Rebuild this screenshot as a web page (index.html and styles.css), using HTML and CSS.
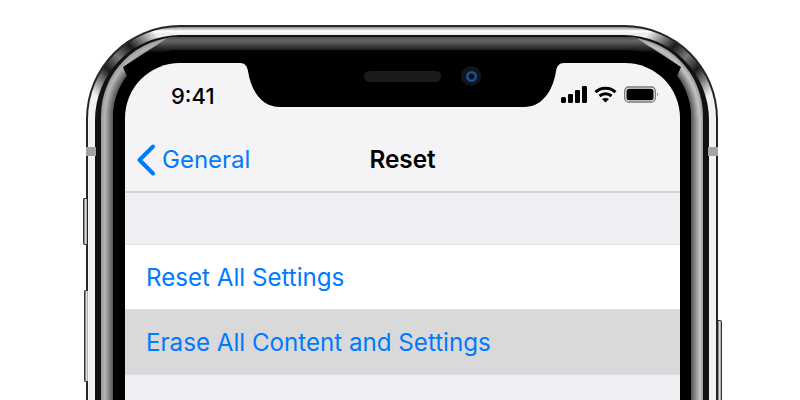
FILE: index.html
```html
<!DOCTYPE html>
<html lang="en">
<head>
    <meta charset="UTF-8">
    <meta name="viewport" content="width=device-width, initial-scale=1.0">
    <title>Reset</title>
    <link rel="stylesheet" href="styles.css">
</head>
<body>
    <div class="device">
        <span class="side-button mute"></span>
        <span class="side-button volume"></span>
        <span class="side-button power"></span>
        <span class="antenna left"></span>
        <span class="antenna right"></span>
        <div class="frame-steel">
            <div class="frame-band">
                <div class="frame-glass">
                    <div class="frame-black">
                        <div class="screen">
                            <svg class="notch" width="324" height="44" viewBox="0 0 324 44">
                                <path d="M0 0H324C319 0 317 3 316 8C313 28 302 44 284 44H40C22 44 11 28 8 8C7 3 5 0 0 0Z" fill="#000"/>
                            </svg>
                            <div class="speaker"></div>
                            <div class="camera"><span class="lens"></span></div>

                            <div class="status-bar">
                                <span class="time">9:41</span>
                                <div class="status-icons">
                                    <svg width="26" height="17" viewBox="0 0 26 17" fill="#000">
                                        <rect x="0" y="11" width="5" height="6" rx="1.5"/>
                                        <rect x="7" y="8" width="5" height="9" rx="1.2"/>
                                        <rect x="14" y="4" width="5" height="13" rx="1.2"/>
                                        <rect x="21" y="0" width="5" height="17" rx="1.2"/>
                                    </svg>
                                    <svg width="23" height="17" viewBox="0 0 23 17" fill="none" stroke="#000" stroke-width="3">
                                        <path d="M1.5 6.2C7 1 16 1 21.5 6.2"/>
                                        <path d="M5.5 10C9 7 14 7 17.5 10"/>
                                        <path d="M11.5 16.5L8 13C10 11.500 13 11.500 15 13Z" fill="#000" stroke="none"/>
                                    </svg>
                                    <svg width="35" height="17" viewBox="0 0 35 17">
                                        <rect x="0.700" y="1" width="30.600" height="15" rx="4" fill="none" stroke="#777" stroke-width="1.300"/>
                                        <rect x="2.500" y="2.800" width="27" height="11.400" rx="2.500" fill="#000"/>
                                        <path d="M33 6.500C34.200 6.800 34.200 10.200 33 10.500Z" fill="#888"/>
                                    </svg>
                                </div>
                            </div>

                            <div class="nav-bar">
                                <a class="back">
                                    <svg width="20" height="32" viewBox="0 0 20 32" fill="none" stroke="#007aff" stroke-width="4" stroke-linecap="round" stroke-linejoin="round">
                                        <path d="M17 2.500L3.500 16L17 29.500"/>
                                    </svg>
                                    General
                                </a>
                                <span class="nav-title">Reset</span>
                            </div>

                            <div class="settings">
                                <div class="row">Reset All Settings</div>
                                <div class="row pressed">Erase All Content and Settings</div>
                            </div>
                        </div>
                    </div>
                </div>
            </div>
        </div>
    </div>
</body>
</html>
```

FILE: styles.css
```css
html, body {
    height: 400px;
    margin: 0;
    overflow: hidden;
    background-color: #fff;
}

body {
    font-family: Inter, "Liberation Sans", sans-serif;
}

.device {
    position: relative;
    width: 628px;
    height: 600px;
    margin: 25px 0 0 86px;
    padding: 2px;
    background-color: #262626;
    border-radius: 94px;
}

/* steel rim, darkens where it goes round the corners */
.frame-steel {
    height: 100%;
    box-sizing: border-box;
    padding: 8px 7px 0;
    border-radius: 92px;
    background-color: #f2f2f2;
    background-image:
        linear-gradient(to bottom left, transparent 18%, #1c1c1c 38%, #777 50%, #1c1c1c 62%, transparent 82%),
        linear-gradient(to bottom right, transparent 18%, #1c1c1c 38%, #777 50%, #1c1c1c 62%, transparent 82%),
        linear-gradient(to bottom, #8a8a8a, #fff 50%, #e8e8e8);
    background-size: 96px 96px, 96px 96px, 100% 8px;
    background-position: left top, right top, left top;
    background-repeat: no-repeat;
}

.frame-band {
    height: 100%;
    box-sizing: border-box;
    padding: 2px 6px 0;
    border-radius: 85px;
    background-color: #111;
}

.frame-glass {
    position: relative;
    height: 100%;
    box-sizing: border-box;
    padding: 13px 12px 0 12px;
    border-radius: 79px;
    background-color: #000;
    background-image:
        radial-gradient(circle 79px at 79px 79px, #000 66px, #555 67px, #b5b5b5 75px, #999 79px),
        radial-gradient(circle 79px at 0 79px, #000 66px, #555 67px, #c4c4c4 75px, #999 79px),
        linear-gradient(to right, #999, #b5b5b5 4px, #555 12px, #000 13px, #000 calc(100% - 13px), #555 calc(100% - 12px), #c4c4c4 calc(100% - 3px), #999);
    background-size: 79px 79px, 79px 79px, 100% 100%;
    background-position: left top, right top, left top;
    background-repeat: no-repeat;
}

/* darker top of the glass, cut off diagonally at the corners */
.frame-glass::before {
    content: "";
    position: absolute;
    top: 0;
    left: 0;
    right: 0;
    height: 62px;
    background: linear-gradient(to bottom, #4a4a4a, #666 4px, #1d1d1d 13px, #000 16px);
    clip-path: polygon(68px 0, calc(100% - 68px) 0, calc(100% - 22px) 30px, calc(100% - 36px) 62px, 36px 62px, 22px 30px);
}

.frame-black {
    position: relative;
    height: 100%;
    box-sizing: border-box;
    padding: 13px 11px 0 12px;
    border-radius: 67px;
    background-color: #000;
}

.screen {
    position: relative;
    height: 100%;
    border-radius: 55px 55px 0 0;
    background-color: #f4f4f6;
    overflow: hidden;
}

.notch {
    position: absolute;
    top: 0;
    left: 115px;
}

.speaker {
    position: absolute;
    top: 8px;
    left: 239px;
    width: 77px;
    height: 11px;
    border-radius: 6px;
    background-color: #1b1b1b;
}

.camera {
    position: absolute;
    top: 3px;
    left: 336px;
    display: flex;
    align-items: center;
    justify-content: center;
    width: 20px;
    height: 20px;
    border-radius: 50%;
    background-color: #14151a;
}

.lens {
    width: 11px;
    height: 11px;
    border-radius: 50%;
    background: radial-gradient(circle, #050a12 22%, #1d5aa0 55%, #0c2340);
}

.status-bar {
    display: flex;
    align-items: center;
    justify-content: space-between;
    box-sizing: border-box;
    height: 62px;
    padding: 3px 21px 0 46px;
}

.status-icons {
    display: flex;
    align-items: center;
    gap: 7px;
    margin-top: -3px;
}

.time {
    font-size: 22px;
    font-weight: 500;
    color: #000;
}

.nav-bar {
    position: relative;
    display: flex;
    align-items: center;
    height: 63px;
    padding-top: 3px;
    border-bottom: 2px solid #d3d3d6;
}

.back {
    display: flex;
    align-items: center;
    gap: 6px;
    padding-left: 11px;
    line-height: 32px;
    font-size: 24px;
    color: #007aff;
}

.nav-title {
    position: absolute;
    left: 0;
    right: 0;
    top: 18px;
    line-height: 32px;
    text-align: center;
    font-size: 24.300px;
    font-weight: 600;
    color: #000;
}

.settings {
    height: 400px;
    padding-top: 51px;
    background-color: #efeff4;
}

.row {
    height: 64px;
    padding-left: 21px;
    line-height: 66px;
    font-size: 24.150px;
    color: #007aff;
    background-color: #fff;
    border-top: 1px solid #dedee0;
}

.row.pressed {
    background-color: #d9d9d9;
    border-bottom: 1px solid #dedee0;
}

/* things that sit on the rim */
.side-button {
    position: absolute;
    box-sizing: border-box;
    width: 4px;
    background: linear-gradient(to right, #666, #ddd 50%, #999);
    border: 1px solid #333;
    border-right: none;
    border-radius: 2px 0 0 2px;
}

.mute {
    top: 173px;
    left: -3px;
    height: 47px;
}

.volume {
    top: 265px;
    left: -2px;
    height: 92px;
}

.power {
    top: 295px;
    right: -4px;
    height: 200px;
    border-width: 1px 1px 1px 0;
    border-style: solid;
    border-color: #333;
    border-radius: 0 2px 2px 0;
}

.antenna {
    position: absolute;
    top: 122px;
    width: 10px;
    height: 9px;
    background-color: #a3a3a3;
}

.antenna.left {
    left: 0;
}

.antenna.right {
    right: 0;
}
```
